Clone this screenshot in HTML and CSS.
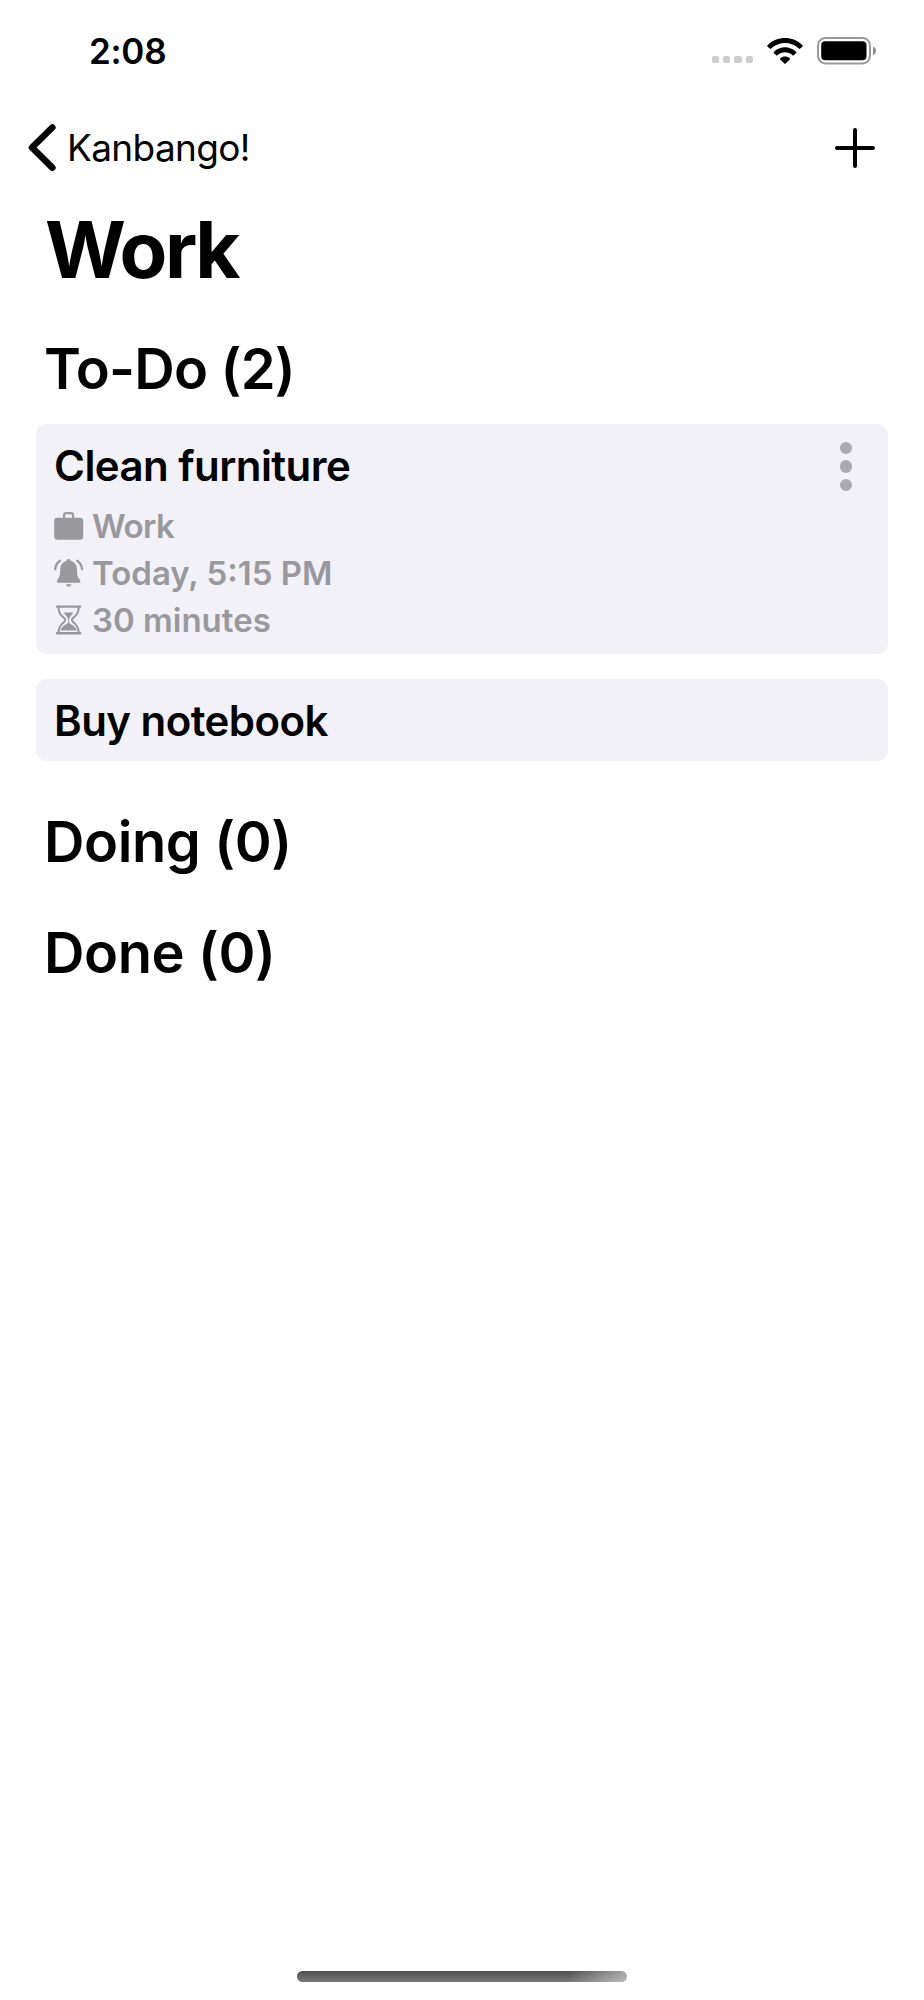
FILE: index.html
```html
<!DOCTYPE html>
<html lang="en">
<head>
  <meta charset="UTF-8">
  <title>Kanbango!</title>
  <link rel="stylesheet" href="styles.css">
</head>
<body>

<div class="status-bar">
  <span class="time">2:08</span>
  <div class="status-icons">
    <div class="signal"><i></i><i></i><i></i><i></i></div>
    <svg class="wifi" width="36" height="28" viewBox="0 0 36 28">
      <path d="M0.6 8.3C10-1.4 26-1.4 35.4 8.3Q36 9 35.4 9.7L33.2 11.6Q32.5 12.2 31.8 11.6C24 4.2 12 4.2 4.2 11.6Q3.5 12.2 2.8 11.6L0.6 9.7Q0 9 0.6 8.3Z"/>
      <path d="M6.9 14.8C13.2 8.6 22.8 8.6 29.1 14.8Q29.7 15.5 29.1 16.1L26.8 18.2Q26.2 18.7 25.5 18.2C21.2 14.4 14.8 14.4 10.5 18.2Q9.8 18.7 9.2 18.2L6.9 16.1Q6.3 15.5 6.9 14.8Z"/>
      <path d="M13.3 21.1C16 18.8 20 18.8 22.7 21.1Q23.4 21.8 22.7 22.5L18.7 26.5Q18 27.2 17.3 26.5L13.3 22.5Q12.6 21.8 13.3 21.1Z"/>
    </svg>
    <svg class="battery" width="60" height="28" viewBox="0 0 60 28">
      <rect x="1" y="1" width="52" height="25.500" rx="7.5" fill="none" stroke="#999" stroke-width="2"/>
      <rect x="4.2" y="4.2" width="45.3" height="19" rx="4"/>
      <path d="M56 9.500C60 11 60 16.500 56 18Z" fill="#8c8c8c"/>
    </svg>
  </div>
</div>

<div class="nav-bar">
  <a class="back">
    <svg width="28" height="48" viewBox="0 0 28 48">
      <path d="M24.300 3.5L4 23.500L24.300 43.700" fill="none" stroke="#000" stroke-width="6.600" stroke-linecap="round" stroke-linejoin="round"/>
    </svg>
    <span>Kanbango!</span>
  </a>
  <svg class="add" width="40" height="40" viewBox="0 0 40 40">
    <path d="M20 2V38M2 20H38" fill="none" stroke="#000" stroke-width="4" stroke-linecap="round"/>
  </svg>
</div>

<h1>Work</h1>

<h2 class="todo">To-Do (2)</h2>
<div class="cards">
  <div class="card">
    <div class="card-head">
      <h3>Clean furniture</h3>
      <div class="dots"><i></i><i></i><i></i></div>
    </div>
    <ul class="meta">
      <li>
        <svg width="30" height="30" viewBox="0 0 30 30">
          <path fill-rule="evenodd" d="M3.200 6.800H9V4.200Q9 1 12.200 1H17Q20.200 1 20.200 4.200V6.800H26Q29.200 6.800 29.200 10V25.500Q29.200 28.700 26 28.700H3.200Q0.200 28.700 0.200 25.500V10Q0.200 6.800 3.200 6.800ZM11.200 6.800H18V4.500Q18 3.200 16.700 3.200H12.500Q11.200 3.200 11.200 4.500Z"/>
        </svg>
        <span class="category">Work</span>
      </li>
      <li>
        <svg width="30" height="30" viewBox="0 0 30 30">
          <path d="M14.600 1C16 1 16.700 2 16.900 3.100C20.700 4 22.800 7.100 23 11.500C23.200 17.500 23.700 19.200 25.700 21.500Q26.600 22.600 26.300 23.700Q26 24.700 24.800 24.700H4.400Q3.200 24.700 2.900 23.700Q2.600 22.600 3.500 21.500C5.500 19.200 6 17.500 6.200 11.500C6.400 7.100 8.500 4 12.300 3.100C12.500 2 13.200 1 14.600 1Z"/>
          <path d="M11.900 26.300H17.300C17 29.500 12.200 29.500 11.900 26.300Z"/>
          <path d="M1.200 11.200Q1.500 6 6 2.800M28 11.200Q27.700 6 23.200 2.800" fill="none" stroke="#98989d" stroke-width="2.300" stroke-linecap="round"/>
        </svg>
        <span>Today, 5:15 PM</span>
      </li>
      <li>
        <svg width="30" height="30" viewBox="0 0 30 30">
          <path d="M3 1.600H26.200M3 28.300H26.200" fill="none" stroke="#98989d" stroke-width="2.400" stroke-linecap="round"/>
          <path d="M4.300 2C4.800 8.500 7 10.500 10.200 13Q12.200 14.900 10.200 16.800C7 19.300 4.800 21.500 4.300 28M24.900 2C24.400 8.500 22.200 10.500 19 13Q17 14.900 19 16.800C22.200 19.300 24.400 21.500 24.900 28" fill="none" stroke="#98989d" stroke-width="2.100"/>
          <path d="M10.400 7.400H18.800Q19.500 7.400 19 8.200C17.500 10.500 15.300 12 15.100 14.500V17.600C15.300 19 22 21 22.600 25.500H6.600C7.200 21 13.900 19 14.100 17.600V14.500C13.900 12 11.700 10.500 10.200 8.200Q9.700 7.400 10.400 7.400Z"/>
        </svg>
        <span>30 minutes</span>
      </li>
    </ul>
  </div>
  <div class="card">
    <h3>Buy notebook</h3>
  </div>
</div>

<h2 class="doing">Doing (0)</h2>
<h2 class="done">Done (0)</h2>

<div class="home-indicator"></div>

</body>
</html>
```
FILE: styles.css
```css
* {
  box-sizing: border-box;
}
body {
  margin: 0;
  height: 2000px;
  display: flex;
  flex-direction: column;
  font-family: Inter, "Liberation Sans", sans-serif;
  background-color: white;
  color: black;
  white-space: nowrap;
}
svg {
  display: block;
  flex: none;
}
h1, h2, h3, ul {
  margin: 0;
  padding: 0;
}
/* status bar */
.status-bar {
  height: 101px;
  display: flex;
  justify-content: space-between;
  align-items: center;
  padding: 0 47px 0 89px;
}
.time {
  font-size: 35px;
  font-weight: 600;
  letter-spacing: -0.3px;
}
.status-icons {
  display: flex;
  align-items: flex-start;
}
.signal {
  display: flex;
  gap: 4px;
  margin: 19px 14px 0 0;
}
.signal i {
  width: 7.300px;
  height: 7.300px;
  border-radius: 2px;
  background-color: #ccc;
}
.battery {
  margin-left: 14px;
}
/* navigation */
.nav-bar {
  height: 93px;
  display: flex;
  justify-content: space-between;
  align-items: center;
  padding: 0 49px 0 28px;
}
.back {
  display: flex;
  align-items: center;
  font-size: 37px;
}
.back span {
  margin-left: 11px;
  letter-spacing: -0.650px;
}
h1 {
  margin: 9px 0 0 45px;
  font-size: 78px;
  line-height: 94px;
  font-weight: 700;
  letter-spacing: -2.5px;
}
h2 {
  margin-left: 44px;
  font-size: 56px;
  line-height: 68px;
  font-weight: 600;
  letter-spacing: -0.4px;
}
.todo {
  margin-top: 38px;
  letter-spacing: -0.8px;
}
.doing {
  margin-top: 47px;
}
.done {
  margin-top: 43px;
}
/* cards */
.cards {
  display: flex;
  flex-direction: column;
  gap: 25px;
  margin: 21px 36px 0;
}
.card {
  padding: 16px 18px 14px;
  border-radius: 11px;
  background-color: #f2f1f7;
}
.card:first-child {
  padding-bottom: 10px;
}
.card-head {
  display: flex;
  justify-content: space-between;
}
h3 {
  font-size: 42px;
  line-height: 52px;
  font-weight: 600;
  letter-spacing: -0.550px;
}
.dots {
  display: flex;
  flex-direction: column;
  gap: 6px;
  margin: 2px 18px 0 0;
}
.dots i {
  width: 12.400px;
  height: 12.400px;
  border-radius: 50%;
  background-color: #aaaaae;
}
.meta {
  margin-top: 11px;
  list-style: none;
  color: #98989d;
  fill: #98989d;
  font-size: 33px;
  font-weight: 600;
}
.meta li {
  height: 47px;
  line-height: 47px;
  display: flex;
  align-items: center;
  gap: 8px;
}
.meta svg {
  margin-top: -1px;
}
.category {
  letter-spacing: -0.6px;
}
.home-indicator {
  width: 330px;
  height: 11px;
  margin: auto auto 18px;
  border-radius: 6px;
  background: linear-gradient(105deg, rgba(255,255,255,0) 82%, rgba(255,255,255,0.5) 100%), linear-gradient(#505050, #777);
}
```
